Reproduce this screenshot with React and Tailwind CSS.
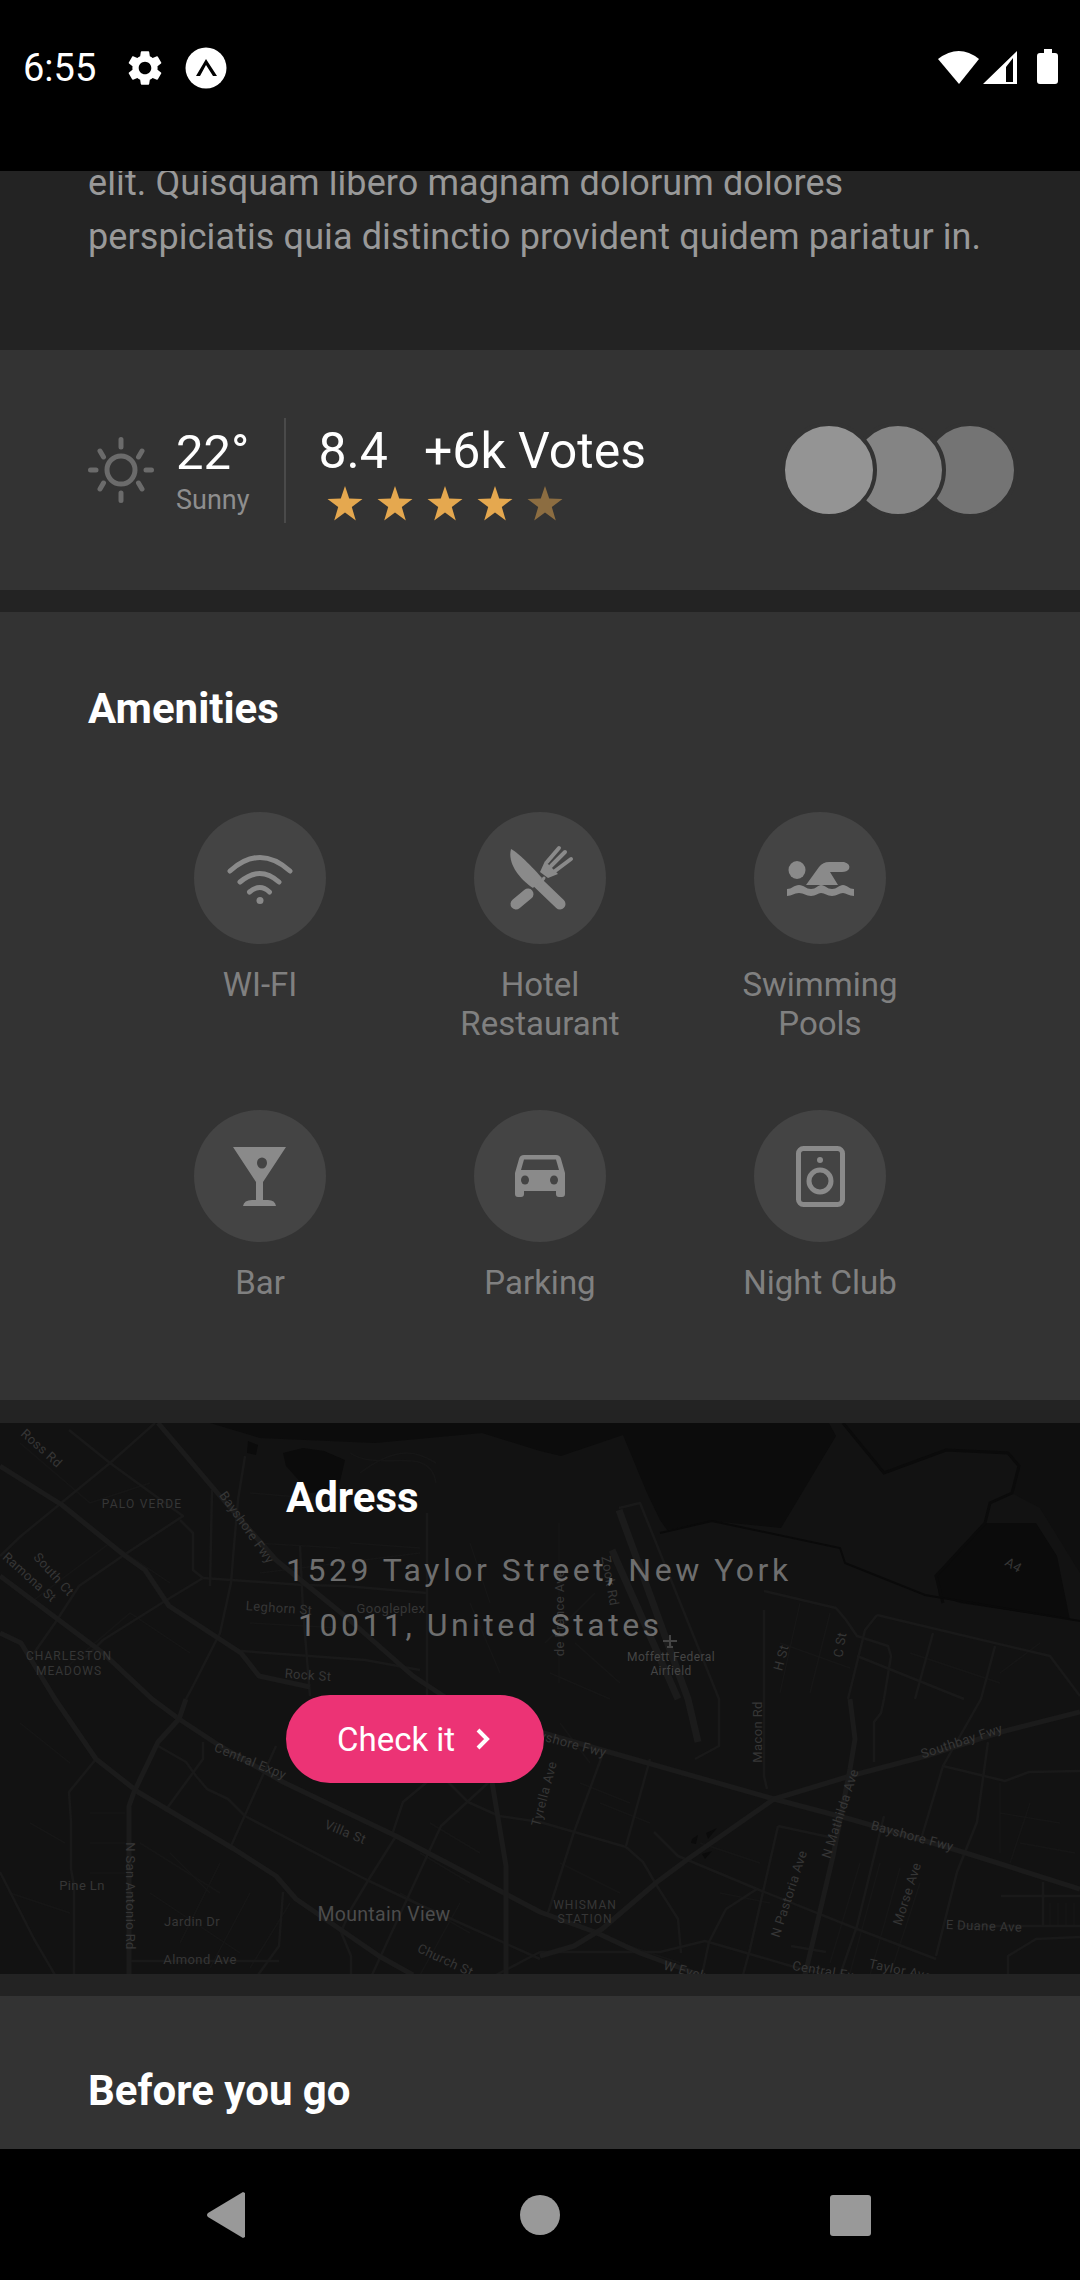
const majorRoads = [
  "M158 0 L220 73 L276 137 L345 193 L413 253 L448 276 L540 309 L609 329 L774 376 L850 396 L953 426 L1080 466",
  "M0 153 L103 230 L152 276 L179 296 L220 323 L283 359 L396 413 L540 489 L595 509 L640 530 L700 552",
  "M540 533 L574 523 L602 506 L657 459 L688 436 L774 376 L850 353 L926 333 L1001 309 L1080 289",
  "M850 276 L855 316 L850 346 L833 433 L805 552",
  "M0 43 L62 82 L124 132 L145 147 L169 183 L241 230 L259 253 L310 264",
  "M0 210 L21 220 L55 276 L96 336 L138 369 L234 426 L276 453 L296 476 L379 533 L413 552",
  "M492 359 L506 443 L506 552",
  "M186 276 L179 296 L158 319 L134 369 L129 383 L129 552",
];
const midRoads = [
  "M155 0 L110 40 L21 113 L0 133",
  "M69 7 L110 40 L183 93 L124 132 L79 163 L55 200 L34 230",
  "M203 155 L165 178 L103 217 L85 235",
  "M203 155 L303 162 L345 163 L427 170",
  "M245 33 L238 77 L234 123 L231 160 L220 210 L193 263 L186 276",
  "M427 90 L427 276 L427 359",
  "M241 228 L365 237 L420 247",
  "M212 67 L210 163",
  "M180 97 L193 110 L193 147 L203 155",
  "M300 123 L303 187 L310 273",
  "M96 336 L69 369 L71 399 L71 446 L74 463 L74 552",
  "M158 323 L186 339 L196 353 L207 366 L228 376 L245 393 L365 456 L407 476 L540 536",
  "M203 319 L203 336 L165 388",
  "M276 323 L231 423",
  "M396 413 L369 456 L351 486 L341 509 L351 533 L351 552",
  "M427 359 L403 379 L393 409",
  "M489 359 L441 403 L427 433 L372 552",
  "M448 359 L468 379 L499 393 L540 399 L626 424 L643 439 L657 463 L678 496 L681 530",
  "M283 469 L279 523 L258 552",
  "M0 449 L34 516 L55 552",
  "M131 538 L279 538",
  "M496 552 L540 529 L660 529 L705 518 L791 543 L830 552",
  "M778 403 L829 414 M778 403 L750 526 L743 552",
  "M654 409 L678 433 L757 466 L857 506 L936 536",
  "M757 466 L726 486 L709 519 L702 552",
  "M602 333 L574 409 L547 493",
  "M650 336 L626 423",
  "M764 168 L836 185 L846 197 L857 213 L888 223 L891 233 L884 276 L881 290 L874 299 L874 339",
  "M764 187 L764 353 L767 366",
  "M877 192 L1050 233 L1080 273 M877 192 L865 207 L848 276",
  "M857 233 L964 276",
  "M933 210 L915 276",
  "M995 223 L981 276 L943 343 L922 413",
  "M943 343 L1005 358 L1029 349 L1080 348",
  "M988 319 L977 399 L957 449 L936 533",
  "M884 393 L857 503 L840 552",
  "M957 503 L1080 503",
  "M1001 473 L1080 473 M1043 459 L1043 503",
  "M1008 552 L1008 533 L1036 516 L1080 514",
  "M791 523 L826 529",
  "M619 85 L640 80 L719 276 L719 323 L695 336",
];
const thinRoads = [
  "M20 20 L90 80 L150 60 M30 180 L110 120 L170 160 M60 250 L130 190 L190 230",
  "M250 70 L310 75 M255 120 L340 125 M250 200 L340 205 M260 150 L420 130",
  "M350 30 C380 50 430 20 436 60 M20 300 L70 340 M30 400 L65 420 M10 470 L70 490",
  "M90 390 L125 390 M90 420 L125 420 M90 450 L125 450 M140 420 L220 470 M150 470 L240 530",
  "M170 430 L210 470 M220 440 L180 520 M250 470 L210 545 M290 480 L250 545",
  "M420 430 L470 460 M400 470 L470 510 M430 400 L480 430 M460 480 L420 552",
  "M560 300 L590 340 M580 360 L630 380 M600 380 L650 400 M560 440 L620 470",
  "M700 420 L760 440 M720 470 L770 480 M620 520 L680 540",
  "M860 440 L830 540 M880 440 L850 550 M900 445 L870 552 M920 460 L890 552",
  "M1000 390 L1060 400 M1020 420 L1075 430 M1000 360 L1000 430 M1030 380 L1010 440",
  "M1050 480 L1050 503 M1058 480 L1058 503 M1066 480 L1066 503 M1074 480 L1074 503",
  "M559 100 L559 260 M595 170 L545 220 M575 220 L620 260 M550 250 L610 276",
  "M780 220 L850 245 M800 180 L780 270 M830 190 L810 270 M910 230 L1000 260",
  "M1000 250 L1040 220",
  "M360 50 C400 20 420 30 436 40 M470 120 L490 180 M470 180 L500 250 M350 120 L420 125",
];
const labels = [
  ["Ross Rd", 41, 26, 42],
  ["PALO VERDE", 142, 82, 0, 12, 1.2],
  ["Bayshore Fwy", 246, 105, 55],
  ["South Ct", 53, 152, 48],
  ["Ramona St", 29, 155, 42],
  ["Leghorn St", 279, 186, 4],
  ["Googleplex", 391, 187, 0],
  ["CHARLESTON", 69, 234, 0, 12, 1],
  ["MEADOWS", 69, 249, 0, 12, 1],
  ["Rock St", 308, 253, 4],
  ["de France Ave", 561, 190, -90],
  ["Zook Rd", 609, 158, 80],
  ["Moffett Federal", 671, 235, 0, 12, 0.4, "#454545"],
  ["Airfield", 671, 249, 0, 12, 0.4, "#454545"],
  ["H St", 782, 235, -75],
  ["C St", 841, 222, -80],
  ["A4", 1013, 143, 30],
  ["Central Expy", 250, 339, 22],
  ["Villa St", 345, 410, 22],
  ["Pine Ln", 82, 464, 0],
  ["N San Antonio Rd", 129, 473, 90],
  ["Jardin Dr", 192, 500, 0],
  ["Almond Ave", 200, 538, 0],
  ["Mountain View", 384, 493, 0, 19.5, 0.3, "#4c4c4c"],
  ["Church St", 445, 538, 25],
  ["Bayshore Fwy", 565, 320, 15],
  ["Tyrella Ave", 545, 371, -75],
  ["Macon Rd", 759, 309, -90],
  ["Southbay Fwy", 962, 319, -18],
  ["N Mathilda Ave", 841, 391, -72],
  ["Bayshore Fwy", 912, 414, 15],
  ["N Pastoria Ave", 790, 471, -72],
  ["Morse Ave", 908, 471, -72],
  ["E Duane Ave", 984, 504, 2],
  ["WHISMAN", 585, 483, 0, 12, 1],
  ["STATION", 585, 497, 0, 12, 1],
  ["W Evelyn", 690, 550, 15],
  ["Central Expy", 830, 550, 10],
  ["Taylor Ave", 900, 548, 12],
];

const MapBackground = () => (
  <svg className="absolute inset-0" width="1080" height="551" viewBox="0 0 1080 551">
    <path
      d="M210 0 L260 15 L375 20 L482 10 L540 28 L561 33 L623 12 L647 70 L660 97 L667 107 L712 98 L781 105 L836 13 L829 0 Z"
      fill="#0c0c0c"
    />
    <path d="M843 0 L884 50 L946 27 L1008 30 L1019 43 L1012 70 L1040 85 L1080 150 L1080 0 Z" fill="#0f0f0f" />
    <path
      d="M936 153 L984 100 L1036 100 L1057 133 L1070 197 L1080 198 L960 180 L939 173 Z"
      fill="#0b0b0b"
    />
    <path d="M283 30 L303 25 L324 28 L345 37 L338 67 L310 70 L286 43 Z" fill="#0b0b0b" />
    <path d="M248 18 L258 22 L256 32 L247 30 Z M692 416 L698 412 L696 421 L691 420 Z M706 410 L717 405 L708 416 Z M702 431 L712 428 L705 436 Z" fill="#0b0b0b" />
    <path d="M843 0 L884 50 L946 27 L1008 30 L1019 43 L1012 70 L990 80 L985 100 L936 153 L943 180" fill="none" stroke="#0b0b0b" strokeWidth="3" />
    <path d="M660 110 L712 98 L840 125 L845 140 L925 172 L1080 198" fill="none" stroke="#0a0a0a" strokeWidth="2" />
    <g fill="none" stroke="#161616" strokeWidth="1.5">
      {thinRoads.map((d) => (
        <path key={d} d={d} />
      ))}
    </g>
    <g fill="none" stroke="#191919" strokeWidth="2.5" strokeLinejoin="round">
      {midRoads.map((d) => (
        <path key={d} d={d} />
      ))}
    </g>
    <g fill="none" stroke="#1b1b1b" strokeWidth="5" strokeLinejoin="round">
      {majorRoads.map((d) => (
        <path key={d} d={d} />
      ))}
    </g>
    <path d="M619 87 L688 276 L698 319 M612 127 L678 276" fill="none" stroke="#1b1b1b" strokeWidth="7" />
    <path d="M670 212 v12 M663 218 h14 M667 224 h6" stroke="#444444" strokeWidth="2" fill="none" />
    {labels.map(([text, x, y, rot, size = 13, spacing = 0.4, color = "#363636"]) => (
      <text
        key={text + x}
        x={x}
        y={y}
        fill={color}
        fontSize={size}
        letterSpacing={spacing}
        textAnchor="middle"
        dominantBaseline="middle"
        transform={`rotate(${rot} ${x} ${y})`}
      >
        {text}
      </text>
    ))}
  </svg>
);

const StatusBar = () => (
  <div className="flex h-[171px] shrink-0 justify-between bg-black pl-[23px] pr-[22px] text-white">
    <div className="flex h-[135px] items-center">
      <span className="text-[38px] leading-none">6:55</span>
      <svg className="ml-[28px]" width="42" height="42" viewBox="0 0 24 24" fill="white">
        <path d="M19.14 12.94c.04-.3.06-.61.06-.94 0-.32-.02-.64-.07-.94l2.03-1.58a.49.49 0 0 0 .12-.61l-1.92-3.32a.488.488 0 0 0-.59-.22l-2.39.96c-.5-.38-1.03-.7-1.62-.94l-.36-2.54a.484.484 0 0 0-.48-.41h-3.84c-.24 0-.43.17-.47.41l-.36 2.54c-.59.24-1.13.57-1.62.94l-2.39-.96c-.22-.08-.47 0-.59.22L2.74 8.87c-.12.21-.08.47.12.61l2.03 1.58c-.05.3-.09.63-.09.94s.02.64.07.94l-2.03 1.58a.49.49 0 0 0-.12.61l1.92 3.32c.12.22.37.29.59.22l2.39-.96c.5.38 1.03.7 1.62.94l.36 2.54c.05.24.24.41.48.41h3.84c.24 0 .44-.17.47-.41l.36-2.54c.59-.24 1.13-.56 1.62-.94l2.39.96c.22.08.47 0 .59-.22l1.92-3.32c.12-.22.07-.47-.12-.61l-2.01-1.58zM12 15.6c-1.98 0-3.6-1.62-3.6-3.6s1.62-3.6 3.6-3.6 3.6 1.62 3.6 3.6-1.62 3.6-3.6 3.6z" />
      </svg>
      <svg className="ml-[19px]" width="42" height="42" viewBox="0 0 42 42">
        <circle cx="21" cy="21" r="20.5" fill="white" />
        <path d="M11 29 L21 12 L32 29 L28 29 L21 18 L15 29 Z" fill="black" />
      </svg>
    </div>
    <svg className="mt-[49px]" width="122" height="36" viewBox="936 49 122 36" fill="white">
      <path d="M959 84 L938 59 Q959 43 979 59 Z" />
      <path fillRule="evenodd" d="M983 84 L1017 51 V84 Z M1006 82 H1013 V58 L1006 67 Z" />
      <path d="M1044 53 V49 H1052 V53 H1055 Q1058 53 1058 56 V81 Q1058 84 1055 84 H1040 Q1037 84 1037 81 V56 Q1037 53 1040 53 Z" />
    </svg>
  </div>
);

const Star = ({ dim }) => (
  <svg width="36" height="35" viewBox="0 0 36 35" className={dim ? "opacity-50" : ""}>
    <path d="M18 0 L22.2 12.6 L35.5 13 L24.8 21 L28.8 34.5 L18 26.6 L7.2 34.5 L11.2 21 L0.5 13 L13.8 12.6 Z" fill="#e5a84f" />
  </svg>
);

const ratingAvatars = ["bg-[#949494] z-30", "bg-[#848484] z-20 -ml-[27px]", "bg-[#747474] z-10 -ml-[24px]"];

const InfoRow = () => (
  <div className="flex h-[240px] shrink-0 items-center justify-between bg-[#333333] pl-[88px] pr-[62px]">
    <div className="flex items-center">
      <svg width="66" height="66" viewBox="0 0 66 66" fill="none" stroke="#6b6b6b" strokeLinecap="round">
        <circle cx="33" cy="33" r="14" strokeWidth="5" />
        <path
          strokeWidth="5"
          d="M33 2.5 V10 M33 56 V63.5 M2.5 33 H8 M58 33 H63.5 M12 14 L15.5 20 M50.5 46 L54 52 M54 14 L50.5 20 M15.5 46 L12 52"
        />
      </svg>
      <div className="ml-[22px] flex flex-col">
        <span className="text-[49px] leading-[56px] text-white">22°</span>
        <span className="mt-[3px] text-[27px] leading-[32px] text-[#8e8e8e]">Sunny</span>
      </div>
      <div className="ml-[34px] h-[105px] w-[2px] bg-[#4a4a4a]" />
      <div className="ml-[33px] flex flex-col pt-[3px]">
        <div className="flex text-[50px] leading-[56px] text-white">
          <span>8.4</span>
          <span className="ml-[36px]">+6k Votes</span>
        </div>
        <div className="ml-[8px] mt-[7px] flex gap-[14px]">
          <Star />
          <Star />
          <Star />
          <Star />
          <Star dim />
        </div>
      </div>
    </div>
    <div className="flex">
      {ratingAvatars.map((cls) => (
        <div key={cls} className={`relative h-[96px] w-[96px] rounded-full border-4 border-[#333333] ${cls}`} />
      ))}
    </div>
  </div>
);

const iconFill = "#8a8a8a";
const iconBg = "#444444";

const WifiIcon = () => (
  <svg width="132" height="132" viewBox="0 0 132 132" fill="none" stroke={iconFill} strokeWidth="5" strokeLinecap="round">
    <path d="M36 59 Q66 32 96 59" />
    <path d="M46 70 Q66 53 85 70" />
    <path d="M55.5 80 Q66 71 75.5 80" />
    <circle cx="66" cy="88.5" r="3.5" fill={iconFill} stroke="none" />
  </svg>
);

const CutleryIcon = () => (
  <svg width="132" height="132" viewBox="0 0 132 132" fill="none" strokeLinecap="round">
    <path d="M85 36 L73 50 M91 40 L77 54 M97 47 L81 59" stroke={iconFill} strokeWidth="4" />
    <path d="M71 49 L84 62 L74 66 L66 60 Z" fill={iconFill} />
    <path d="M54 82 L42 92" stroke={iconFill} strokeWidth="11" />
    <path d="M37 37 C46 42 61 58 68 66 L59 76 C47 68 33 52 37 37 Z" fill={iconFill} />
    <path d="M62 69 L86 92" stroke={iconFill} strokeWidth="11" />
    <path d="M64 74 L70 66" stroke={iconFill} strokeWidth="3" />
  </svg>
);

const SwimIcon = () => (
  <svg width="132" height="132" viewBox="0 0 132 132" fill={iconFill}>
    <ellipse cx="43" cy="58" rx="8.5" ry="9" />
    <path d="M52 73 L65 55 Q69 50 75 50 L90 50 Q97 52 95 57 Q93 60 88 60 L76 60 L84 73 Z" />
    <path
      d="M33 84 V77 C38 77 40 73 45 73 C50 73 52 77 57 77 C62 77 64 73 67 73 C71 73 73 77 78 77 C83 77 85 73 89 73 C93 73 95 77 100 77 V84 C95 84 92 81 89 81 C85 81 83 84 78 84 C73 84 71 81 67 81 C64 81 62 84 57 84 C52 84 50 81 45 81 C40 81 38 84 33 84 Z"
    />
  </svg>
);

const MartiniIcon = () => (
  <svg width="132" height="132" viewBox="0 0 132 132" fill={iconFill}>
    <path d="M39 37 H92 L69 72 V90 H74 Q81 90 82 96 H49 Q50 90 58 90 H62 V72 Z" />
    <ellipse cx="68" cy="53" rx="5" ry="5.5" fill={iconBg} />
  </svg>
);

const CarIcon = () => (
  <svg width="132" height="132" viewBox="0 0 132 132" fill={iconFill}>
    <path d="M50 45 H82 Q86 45 87 49 L91 63 V84 Q91 87 88 87 H85 Q82 87 82 84 V81 H50 V84 Q50 87 47 87 H44 Q41 87 41 84 V63 L45 49 Q46 45 50 45 Z" />
    <path d="M50 49.5 H82 L85 60 H47 Z" fill={iconBg} />
    <ellipse cx="51" cy="70" rx="4" ry="4.5" fill={iconBg} />
    <ellipse cx="80" cy="70" rx="4" ry="4.5" fill={iconBg} />
  </svg>
);

const SpeakerIcon = () => (
  <svg width="132" height="132" viewBox="0 0 132 132" fill="none" stroke={iconFill} strokeWidth="5">
    <rect x="44.5" y="38.5" width="44" height="56" rx="5" />
    <circle cx="66" cy="71" r="11" />
    <circle cx="66" cy="50" r="3" fill={iconFill} stroke="none" />
  </svg>
);

const amenities = [
  { name: ["WI-FI"], Icon: WifiIcon },
  { name: ["Hotel", "Restaurant"], Icon: CutleryIcon },
  { name: ["Swimming", "Pools"], Icon: SwimIcon },
  { name: ["Bar"], Icon: MartiniIcon },
  { name: ["Parking"], Icon: CarIcon },
  { name: ["Night Club"], Icon: SpeakerIcon },
];

const Amenities = () => (
  <div className="mt-[22px] h-[788px] shrink-0 bg-[#333333]">
    <h2 className="pl-[88px] pt-[73px] text-[42px] font-bold leading-[48px] text-white">Amenities</h2>
    <div className="mx-auto mt-[79px] grid w-[840px] grid-cols-3">
      {amenities.map(({ name, Icon }) => (
        <div key={name[0]} className="flex h-[298px] flex-col items-center">
          <div className="h-[132px] w-[132px] rounded-full bg-[#444444]">
            <Icon />
          </div>
          <div className="mt-[21px] text-center text-[33px] leading-[39px] text-[#808080]">
            {name.map((line) => (
              <div key={line}>{line}</div>
            ))}
          </div>
        </div>
      ))}
    </div>
  </div>
);

const Address = () => (
  <div className="relative mt-[23px] h-[551px] shrink-0 overflow-hidden bg-[#121212]">
    <MapBackground />
    <div className="relative pl-[286px] pt-[51px]">
      <h2 className="text-[42px] font-bold leading-[48px] text-white">Adress</h2>
      <p className="mt-[21px] text-[32px] leading-[55px] tracking-[3.5px] text-[#6e6e6e]">
        1529 Taylor Street, New York
        <br />
        <span className="ml-[12px]">10011, United States</span>
      </p>
      <button className="mt-[42px] flex h-[88px] w-[258px] items-center rounded-full bg-[#ec3375] pl-[51px] text-white">
        <span className="text-[33px] leading-none">Check it</span>
        <svg className="ml-[21px]" width="14" height="22" viewBox="0 0 14 22" fill="none" stroke="white" strokeWidth="4">
          <path d="M2 2 L11 11 L2 20" />
        </svg>
      </button>
    </div>
  </div>
);

const NavBar = () => (
  <div className="flex h-[132px] shrink-0 items-center justify-between bg-black pl-[207px] pr-[209px]">
    <svg width="38" height="46" viewBox="0 0 38 46">
      <path d="M38 1 V45 L36 46 L1 25 Q-1 23 1 21 L36 0 Z" fill="#999999" />
    </svg>
    <div className="ml-[5px] h-[40px] w-[40px] rounded-full bg-[#999999]" />
    <div className="h-[41px] w-[41px] rounded-[3px] bg-[#999999]" />
  </div>
);

export default function App() {
  return (
    <div className="flex h-[2280px] w-[1080px] flex-col overflow-hidden bg-[#232323] font-['Roboto',sans-serif]">
      <StatusBar />
      <div className="h-[179px] shrink-0 overflow-hidden pl-[88px]">
        <p className="-mt-[15px] whitespace-nowrap text-[36px] leading-[54px] tracking-[0.1px] text-[#999999]">
          elit. Quisquam libero magnam dolorum dolores
          <br />
          perspiciatis quia distinctio provident quidem pariatur in.
        </p>
      </div>
      <InfoRow />
      <Amenities />
      <Address />
      <div className="mt-[22px] h-[153px] shrink-0 bg-[#333333] pl-[88px] pt-[71px]">
        <h2 className="text-[42px] font-bold leading-[48px] text-white">Before you go</h2>
      </div>
      <NavBar />
    </div>
  );
}
